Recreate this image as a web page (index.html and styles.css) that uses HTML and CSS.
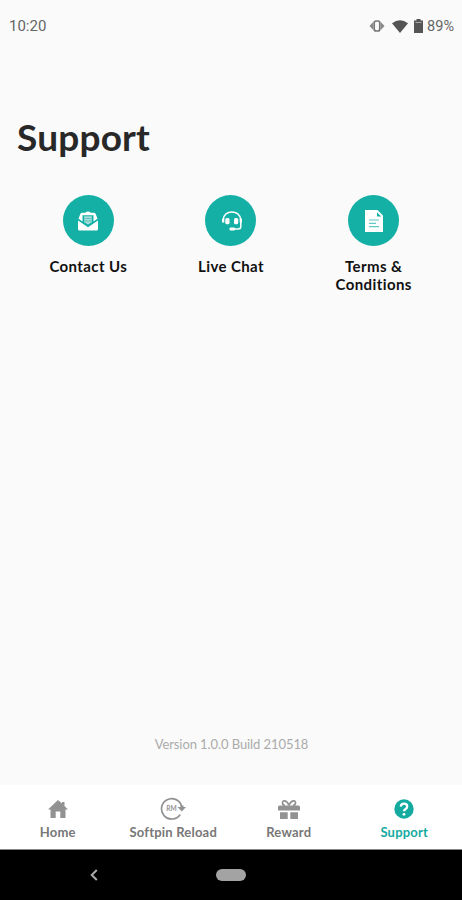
FILE: index.html
```html
<!DOCTYPE html>
<html lang="en">

<head>
  <meta charset="UTF-8" />
  <meta name="viewport" content="width=device-width, initial-scale=1.0" />
  <title>Support</title>
  <link rel="stylesheet" href="styles.css">
</head>

<body>
  <header class="status-bar">
    <span class="time">10:20</span>
    <div class="status-icons">
      <svg class="vibrate" width="16" height="12" viewBox="0 0 16 12">
        <rect x="5.200" y="1" width="5.600" height="10" rx="2" fill="none" stroke="#777" stroke-width="1.700" />
        <path d="M4.200 2v8L0.500 6zM11.800 2v8l3.700-4z" fill="#888" />
      </svg>
      <svg class="wifi" width="16" height="13" viewBox="0 0 16 13">
        <path d="M0 3.200Q8-2.600 16 3.200L8 13z" fill="#555" />
      </svg>
      <svg class="battery" width="9" height="14" viewBox="0 0 9 14">
        <path d="M2.500 0h4v1.500H9V14H0V1.500h2.500z" fill="#555" />
        <path d="M1.500 3.500h6" stroke="#aaa" />
      </svg>
      <span class="percent">89%</span>
    </div>
  </header>

  <main>
    <h1>Support</h1>

    <div class="options">
      <a class="option">
        <span class="circle">
          <svg width="20" height="20" viewBox="0 0 20 20">
            <path d="M0 9.500l10 6.700 10-6.700V18q0 1.500-1.500 1.500h-17Q0 19.500 0 18z" fill="#fff" />
            <path d="M0.500 7.800L2.300 3Q2.800 1.700 4.200 1.700h3Q10-.7 12.800 1.700h3q1.400 0 1.900 1.300l1.800 4.800-4 2.700V4.200h-11v6.300z" fill="#fff" />
            <path d="M6.200 5.200h7.600v6L10 13.500l-3.800-2.300z" fill="#a3ddd9" />
            <path d="M6.500 7.500h7M6.500 10h7" stroke="#4fc3bb" stroke-width="0.800" />
          </svg>
        </span>
        <span class="label">Contact Us</span>
      </a>
      <a class="option">
        <span class="circle">
          <svg class="headset" width="20" height="20" viewBox="0 0 20 20">
            <path d="M1.200 11V9C1.500-1.800 18.200-1.800 18.800 9v6.500q0 2.500-2.500 2.500H12" fill="none" stroke="#fff" stroke-width="1.500" />
            <rect x="3.300" y="7" width="4.200" height="6.200" rx="1.500" fill="#fff" />
            <rect x="12" y="7" width="4.200" height="6.200" rx="1.500" fill="#fff" />
            <rect x="7.500" y="16.400" width="5.500" height="3" rx="1" fill="#fff" />
            <path d="M1.200 7.500v4M18.800 7.500v4" stroke="#fff" stroke-width="2.200" />
          </svg>
        </span>
        <span class="label">Live Chat</span>
      </a>
      <a class="option">
        <span class="circle">
          <svg class="document" width="18" height="22" viewBox="0 0 18 22">
            <path d="M0 0h12.500L18 5.500V22H0z" fill="#fff" />
            <path d="M12 2.300v4.200h4.200z" fill="#14b0a5" />
            <path d="M4 10h10M4 13.300h7M4 16.600h10" stroke="#62c8c1" stroke-width="1.200" />
          </svg>
        </span>
        <span class="label">Terms &amp;<br>Conditions</span>
      </a>
    </div>

    <p class="version">Version 1.0.0 Build 210518</p>
  </main>

  <nav class="tabs">
    <a class="tab">
      <svg width="20" height="18" viewBox="0 0 20 18">
        <path d="M10 0l4 3.600V2h2.500v4L20 9.500h-2.500V18H12.300v-6.500H7.700V18H2.500V9.500H0z" fill="#929292" />
      </svg>
      <span>Home</span>
    </a>
    <a class="tab">
      <svg width="26" height="24" viewBox="0 0 26 24">
        <path d="M20.200 17.500A10.200 10.200 0 1 1 21.500 9" fill="none" stroke="#929292" stroke-width="1.700" />
        <path d="M17.500 10h3V8.500h3V10h2.500l-4.200 4.500z" fill="#929292" />
        <text x="11.500" y="14.300" text-anchor="middle">RM</text>
      </svg>
      <span>Softpin Reload</span>
    </a>
    <a class="tab">
      <svg width="22" height="19" viewBox="0 0 22 19">
        <path d="M1.500 5.500h19q1.500 0 1.500 1.500v3.500H0V7q0-1.500 1.500-1.500zM2 12.200h7.700V19H2zM12.300 12.200H20V19h-7.700z" fill="#929292" />
        <path d="M11 5.500C9 0 4.500-.5 4.500 3q0 2 2.500 2.500M11 5.500C13 0 17.500-.5 17.500 3q0 2-2.500 2.500" fill="none" stroke="#929292" stroke-width="1.700" />
      </svg>
      <span>Reward</span>
    </a>
    <a class="tab active">
      <svg width="20" height="20" viewBox="0 0 20 20">
        <circle cx="10" cy="10" r="9.700" fill="#14aaa0" />
        <path d="M6.800 7.700Q7 4.700 10 4.700q3.200 0 3.200 2.700 0 1.500-1.600 2.500T10 12.300" fill="none" stroke="#fff" stroke-width="2.300" />
        <circle cx="10" cy="15.300" r="1.400" fill="#fff" />
      </svg>
      <span>Support</span>
    </a>
  </nav>

  <footer class="system-bar">
    <svg width="8" height="12" viewBox="0 0 8 12">
      <path d="M6.800 1L1.700 6l5.100 5" fill="none" stroke="#aaa" stroke-width="2" />
    </svg>
    <span class="pill"></span>
  </footer>
</body>

</html>
```
FILE: styles.css
```css
* {
  box-sizing: border-box;
}

body {
  margin: 0;
  height: 900px;
  display: flex;
  flex-direction: column;
  overflow: hidden;
  background-color: #fafafa;
  font-family: "Century Gothic", Lato, sans-serif;
  font-variant-ligatures: none;
  color: #111;
}

.status-bar {
  height: 52px;
  padding: 0 8px 0 9px;
  display: flex;
  align-items: center;
  justify-content: space-between;
  font-family: Roboto, sans-serif;
  font-size: 15px;
  color: #666;
}

.status-icons {
  display: flex;
  align-items: center;
}

.wifi {
  margin-left: 7px;
}

.battery {
  margin: 0 4px 0 6px;
}

.percent {
  font-size: 14.5px;
}

main {
  flex: 1;
  display: flex;
  flex-direction: column;
}

h1 {
  margin: 63px 0 0 17px;
  font-size: 37px;
  line-height: 44px;
  font-weight: 700;
  letter-spacing: 0.2px;
  color: #282828;
}

.options {
  margin: 36px 17px 0;
  display: grid;
  grid-template-columns: repeat(3, 1fr);
}

.option {
  display: flex;
  flex-direction: column;
  align-items: center;
}

.circle {
  width: 51px;
  height: 51px;
  display: flex;
  align-items: center;
  justify-content: center;
  border-radius: 50%;
  background-color: #14b0a5;
}

.headset {
  margin-left: 2px;
}

.document {
  margin-top: 1px;
}

.label {
  margin-top: 11px;
  font-size: 15px;
  line-height: 18px;
  font-weight: 700;
  letter-spacing: 0.4px;
  text-align: center;
}

.version {
  margin: auto 0 33px;
  padding-left: 1px;
  font-size: 13px;
  line-height: 16px;
  letter-spacing: -0.08px;
  text-align: center;
  color: #aaa;
}

.tabs {
  height: 65px;
  display: grid;
  grid-template-columns: repeat(4, 1fr);
  background-color: #fff;
  border-bottom: 1px solid #888;
}

.tab {
  display: grid;
  grid-template-rows: 24px 16px;
  row-gap: 3px;
  padding-top: 12px;
  place-items: center;
  align-content: start;
  font-size: 13px;
  line-height: 16px;
  font-weight: 700;
  letter-spacing: 0.2px;
  color: #777;
}

.tab text {
  font-size: 6.5px;
  letter-spacing: 0;
  fill: #929292;
}

.tab.active {
  color: #14aaa0;
}

.system-bar {
  height: 50px;
  padding-left: 90px;
  display: flex;
  align-items: center;
  background-color: #000;
}

.pill {
  width: 30px;
  height: 12px;
  margin-left: 118px;
  border-radius: 6px;
  background-color: #a3a3a3;
}
```
